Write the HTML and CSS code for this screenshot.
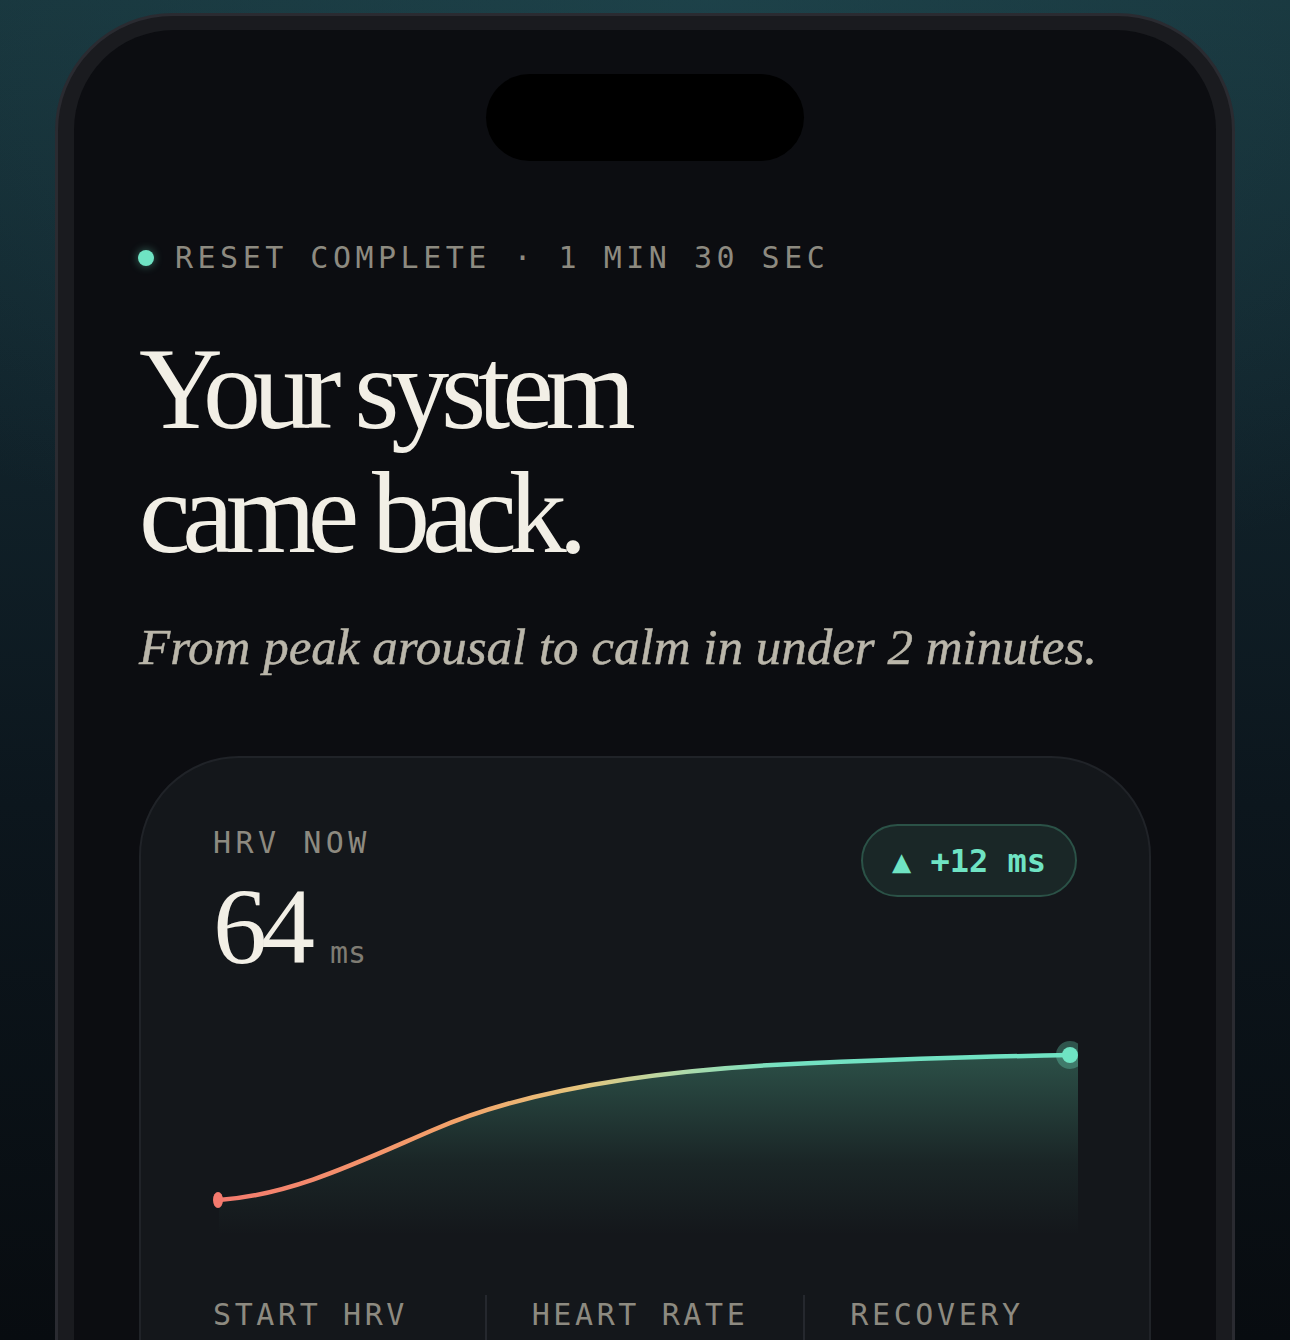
FILE: index.html
```html
<!DOCTYPE html>
<html lang="en">
<head>
<meta charset="utf-8">
<title>Reset complete</title>
<link rel="stylesheet" href="styles.css">
</head>
<body>
<div class="phone">
  <div class="screen">
    <div class="island"></div>
    <main class="content">
      <div class="status">
        <span class="dot"></span>
        <span class="eyebrow">RESET COMPLETE · 1 MIN 30 SEC</span>
      </div>
      <h1 class="title">Your system<br>came back.</h1>
      <p class="lede">From peak arousal to calm in under 2 minutes.</p>

      <section class="card">
        <div class="card-head">
          <div class="metric">
            <div class="label">HRV NOW</div>
            <div class="value"><span class="num">64</span><span class="unit">ms</span></div>
          </div>
          <div class="badge">▲ +12 ms</div>
        </div>

        <svg class="chart" width="865" height="200" viewBox="0 0 865 200">
          <defs>
            <linearGradient id="stroke" gradientUnits="userSpaceOnUse" x1="6" y1="0" x2="858" y2="0">
              <stop offset="0" stop-color="#f47a6e"/>
              <stop offset="0.28" stop-color="#f3a36a"/>
              <stop offset="0.42" stop-color="#e6c47c"/>
              <stop offset="0.53" stop-color="#b6d9a6"/>
              <stop offset="0.66" stop-color="#74e1c2"/>
              <stop offset="1" stop-color="#6fe3c3"/>
            </linearGradient>
            <linearGradient id="fill" gradientUnits="userSpaceOnUse" x1="0" y1="20" x2="0" y2="200">
              <stop offset="0" stop-color="#5fc9a6" stop-opacity="0.32"/>
              <stop offset="0.6" stop-color="#5fc9a6" stop-opacity="0.08"/>
              <stop offset="1" stop-color="#5fc9a6" stop-opacity="0"/>
            </linearGradient>
          </defs>
          <path d="M6,165 C80,160 150,125 220,95 C300,60 420,35 600,28 C720,23 800,21 858,20 L865,20 L865,200 L6,200 Z" fill="url(#fill)"/>
          <path d="M6,165 C80,160 150,125 220,95 C300,60 420,35 600,28 C720,23 800,21 858,20" fill="none" stroke="url(#stroke)" stroke-width="4.5" stroke-linecap="round"/>
          <ellipse cx="5" cy="165" rx="5" ry="8" fill="#f47a6e"/>
          <circle cx="857" cy="20" r="14" fill="#6fe3c3" fill-opacity="0.3"/>
          <circle cx="857" cy="20" r="8" fill="#6fe3c3"/>
        </svg>

        <div class="stats">
          <div class="stat"><div class="label">START HRV</div></div>
          <div class="stat"><div class="label">HEART RATE</div></div>
          <div class="stat"><div class="label">RECOVERY</div></div>
        </div>
      </section>
    </main>
  </div>
</div>
</body>
</html>
```

FILE: styles.css
```css
html, body {
  margin: 0;
  padding: 0;
  width: 1290px;
  height: 1340px;
  overflow: hidden;
}

body {
  background:
    radial-gradient(ellipse 90% 45% at 55% 0%, rgba(34, 78, 86, 0.55) 0%, rgba(34, 78, 86, 0) 100%),
    linear-gradient(180deg, #173239 0%, #11232b 30%, #0c161d 60%, #080c10 100%);
  padding-top: 13px;
  box-sizing: border-box;
}

.phone {
  margin-left: 55px;
  width: 1180px;
  height: 1500px;
  box-sizing: border-box;
  border: 3px solid #2a2b31;
  border-radius: 118px;
  background: #1a1b1f;
  padding: 14px 16px;
}

.screen {
  height: 100%;
  background: #0c0d11;
  border-radius: 100px;
  padding-top: 44px;
  box-sizing: border-box;
  overflow: hidden;
}

.island {
  width: 318px;
  height: 87px;
  margin: 0 auto;
  background: #000;
  border-radius: 44px;
}

.content {
  padding: 0 65px;
}

.status {
  display: flex;
  align-items: center;
  gap: 21px;
  margin-top: 79px;
  height: 36px;
}

.dot {
  width: 16px;
  height: 16px;
  border-radius: 50%;
  background: #6fe3c3;
  box-shadow: 0 0 10px rgba(111, 227, 195, 0.45);
  margin-left: -1px;
}

.eyebrow,
.label {
  font-family: "DejaVu Sans Mono", monospace;
  font-size: 30px;
  line-height: 36px;
  letter-spacing: 4.5px;
  color: #8d8a80;
}

.title {
  margin: 51px 0 0;
  font-family: "Liberation Serif", serif;
  font-weight: 400;
  font-size: 116px;
  line-height: 124px;
  letter-spacing: -0.07em;
  color: #f2efe6;
}

.lede {
  margin: 42px 0 0;
  font-family: "Liberation Serif", serif;
  font-style: italic;
  font-size: 51px;
  line-height: 60px;
  color: #bab6aa;
  -webkit-text-stroke: 0.5px #bab6aa;
}

.card {
  margin-top: 79px;
  border: 2px solid #202328;
  border-radius: 100px 100px 0 0;
  background: #14171b;
  padding: 67px 72px 0;
  height: 700px;
  box-sizing: border-box;
}

.card-head {
  display: flex;
  justify-content: space-between;
  align-items: flex-start;
}

.value {
  display: flex;
  align-items: baseline;
  margin-top: 12px;
}

.num {
  font-family: "Liberation Serif", serif;
  font-size: 108px;
  line-height: 108px;
  letter-spacing: -6px;
  color: #f2efe6;
}

.unit {
  margin-left: 21px;
  font-family: "DejaVu Sans Mono", monospace;
  font-size: 30px;
  line-height: 36px;
  color: #7f7c73;
}

.badge {
  margin-top: -1px;
  height: 73px;
  box-sizing: border-box;
  display: flex;
  align-items: center;
  padding: 0 29px;
  border: 2px solid #2b5247;
  border-radius: 37px;
  background: #1a2727;
  font-family: "DejaVu Sans Mono", monospace;
  font-size: 32px;
  font-weight: 700;
  color: #6fe3c3;
  white-space: pre;
}

.chart {
  display: block;
  margin-top: 54px;
  overflow: hidden;
}

.stats {
  display: flex;
  margin-top: 60px;
}

.stat {
  flex: 1 1 0;
  padding: 2px 45px 0;
  border-left: 2px solid #25282e;
  height: 200px;
}

.stat:first-child {
  padding-left: 0;
  border-left: 0;
}

.stat:last-child {
  padding-right: 0;
}

.stat .label {
  letter-spacing: 3.6px;
}
```
